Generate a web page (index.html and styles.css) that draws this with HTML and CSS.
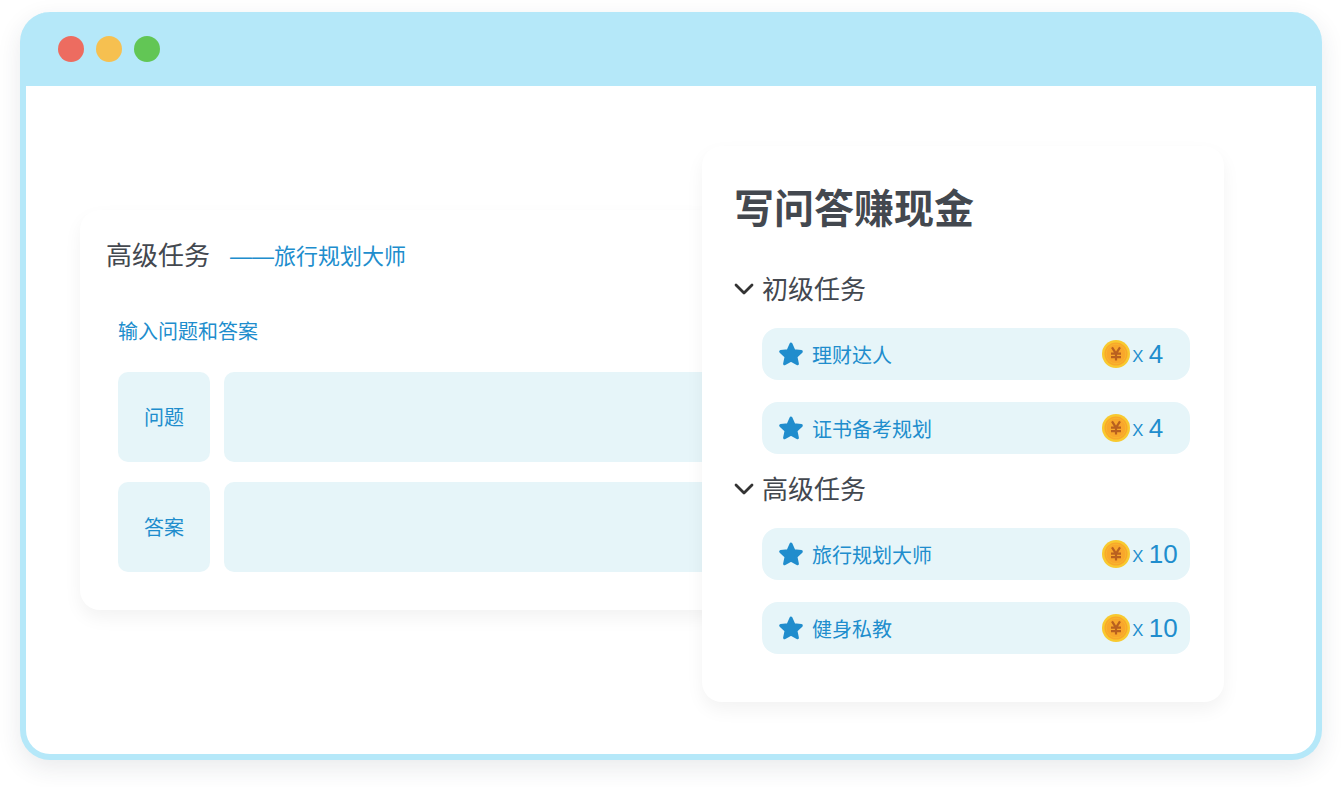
FILE: index.html
```html
<!DOCTYPE html>
<html lang="zh-CN">
<head>
  <meta charset="UTF-8">
  <meta name="viewport" content="width=device-width, initial-scale=1">
  <title>写问答赚现金</title>
  <link rel="stylesheet" href="styles.css">
</head>
<body>
<!-- shared icons -->
<svg class="sprite" aria-hidden="true">
  <symbol id="star" viewBox="0 0 26 26">
    <path d="M13 3l3 6.8 7.3.8-5.4 5 1.500 7.200-6.400-3.600-6.400 3.600 1.500-7.200-5.400-5 7.300-.8z" fill="currentColor" stroke="currentColor" stroke-width="3" stroke-linejoin="round"/>
  </symbol>
  <symbol id="arrow" viewBox="0 0 20 20">
    <path d="M2 7l8 8 8-8" fill="none" stroke="currentColor" stroke-width="2.8" stroke-linecap="round" stroke-linejoin="round"/>
  </symbol>
  <symbol id="coin" viewBox="0 0 28 28">
    <circle cx="14" cy="14" r="14" fill="#f8c92f"/>
    <circle cx="14" cy="14" r="11.5" fill="#f9a72b"/>
    <circle cx="14" cy="14" r="9.8" fill="none" stroke="#f8b62d" stroke-width="1"/>
    <path d="M10 7.4l4 6.3 4-6.3M9 13.7h10M9 17.2h10M14 13v7.6" fill="none" stroke="#b9601f" stroke-width="2.2"/>
  </symbol>
</svg>

<div class="window">
  <header class="bar">
    <span class="dot red"></span>
    <span class="dot yellow"></span>
    <span class="dot green"></span>
  </header>

  <main class="content">
    <form class="card editor">
      <div class="editor-head">
        <h2>高级任务</h2>
        <span class="sub">——旅行规划大师</span>
      </div>
      <div class="editor-body">
        <p class="tip">输入问题和答案</p>
        <div class="field">
          <label for="question">问题</label>
          <textarea id="question"></textarea>
        </div>
        <div class="field">
          <label for="answer">答案</label>
          <textarea id="answer"></textarea>
        </div>
      </div>
    </form>

    <section class="card tasks">
      <h1>写问答赚现金</h1>

      <div class="group">
        <button type="button" class="group-title"><svg class="arrow"><use href="#arrow"/></svg>初级任务</button>
        <ul>
          <li><button type="button" class="task">
            <svg class="star"><use href="#star"/></svg>
            <span class="name">理财达人</span>
            <span class="reward"><svg class="coin"><use href="#coin"/></svg><span class="times">x</span><span class="num">4</span></span>
          </button></li>
          <li><button type="button" class="task">
            <svg class="star"><use href="#star"/></svg>
            <span class="name">证书备考规划</span>
            <span class="reward"><svg class="coin"><use href="#coin"/></svg><span class="times">x</span><span class="num">4</span></span>
          </button></li>
        </ul>
      </div>

      <div class="group">
        <button type="button" class="group-title"><svg class="arrow"><use href="#arrow"/></svg>高级任务</button>
        <ul>
          <li><button type="button" class="task">
            <svg class="star"><use href="#star"/></svg>
            <span class="name">旅行规划大师</span>
            <span class="reward"><svg class="coin"><use href="#coin"/></svg><span class="times">x</span><span class="num">10</span></span>
          </button></li>
          <li><button type="button" class="task">
            <svg class="star"><use href="#star"/></svg>
            <span class="name">健身私教</span>
            <span class="reward"><svg class="coin"><use href="#coin"/></svg><span class="times">x</span><span class="num">10</span></span>
          </button></li>
        </ul>
      </div>
    </section>
  </main>
</div>
</body>
</html>
```
FILE: styles.css
```css
:root {
  --blue: #208dcd;
  --light: #e6f5f9;
  --frame: #b5e8f9;
  --text: #43484f;
}

* {
  box-sizing: border-box;
}

body {
  margin: 0;
  padding: 12px 19px 27px 20px;
  background: #fff;
  color: var(--text);
  font-family: "Noto Sans CJK SC", sans-serif;
}

h1, h2, p, ul {
  margin: 0;
  padding: 0;
}

ul {
  list-style: none;
}

button, textarea {
  border: 0;
  padding: 0;
  font-family: inherit;
}

button {
  cursor: pointer;
}

.sprite {
  display: none;
}

.window {
  border: 6px solid var(--frame);
  border-top: 0;
  border-radius: 30px;
  background: #fff;
  box-shadow: 0 8px 24px rgba(40, 50, 70, .1);
}

.bar {
  display: flex;
  align-items: center;
  gap: 12px;
  height: 74px;
  padding: 0 32px;
  background: var(--frame);
  border-radius: 24px 24px 0 0;
}

.dot {
  width: 26px;
  height: 26px;
  border-radius: 50%;
}
.red {
  background: #ed6c60;
}
.yellow {
  background: #f6c050;
}
.green {
  background: #62c655;
}

.content {
  display: flex;
  align-items: flex-start;
  padding: 60px 92px 52px 54px;
}

.card {
  background: #fff;
  border-radius: 20px;
  box-shadow: 0 8px 18px rgba(0, 0, 0, .05);
}

/* left card runs under the task list */
.editor {
  flex: 1;
  min-width: 0;
  margin: 64px -20px 0 0;
  padding: 26px 0 38px 26px;
}

.editor-head {
  display: flex;
  align-items: center;
  gap: 20px;
  height: 36px;
}

h2, .group-title {
  font-size: 26px;
  font-weight: 400;
  line-height: 36px;
}

.sub {
  color: var(--blue);
  font-family: "Liberation Sans", "Noto Sans CJK SC", sans-serif;
  font-size: 22px;
}

.editor-body {
  display: flex;
  flex-direction: column;
  gap: 20px;
  padding: 44px 0 0 12px;
}

.tip {
  margin-bottom: 6px;
  color: var(--blue);
  font-size: 20px;
  line-height: 30px;
}

.field {
  display: flex;
  gap: 14px;
  height: 90px;
}
.field label {
  display: flex;
  align-items: center;
  justify-content: center;
  width: 92px;
  padding-bottom: 2px;
  border-radius: 10px;
  background: var(--light);
  color: var(--blue);
  font-size: 20px;
}
.field textarea {
  flex: 1;
  min-width: 0;
  padding: 12px;
  border-radius: 10px;
  background: var(--light);
  color: var(--text);
  font-size: 20px;
  resize: none;
}

.tasks {
  position: relative;
  width: 522px;
  padding: 36px 34px 48px 32px;
}

h1 {
  margin-bottom: 40px;
  font-size: 40px;
  font-weight: 700;
  line-height: 48px;
}

.group + .group {
  margin-top: 16px;
}

.group-title {
  display: flex;
  align-items: center;
  gap: 8px;
  margin-bottom: 22px;
  background: none;
  color: var(--text);
}

.arrow {
  width: 20px;
  height: 20px;
  color: #333;
}

.group ul {
  display: flex;
  flex-direction: column;
  gap: 22px;
  padding-left: 28px;
}

.task {
  display: flex;
  align-items: center;
  gap: 8px;
  width: 100%;
  height: 52px;
  padding-left: 16px;
  border-radius: 16px;
  background: var(--light);
  color: var(--blue);
  font-size: 20px;
  text-align: left;
}

.star {
  width: 26px;
  height: 26px;
}

.name {
  flex: 1;
}

.reward {
  display: flex;
  align-items: center;
  width: 88px;
}

.coin {
  width: 28px;
  height: 28px;
}

.times {
  margin: 0 5px 0 2px;
  font-family: Inter, sans-serif;
  font-size: 22px;
  font-weight: 300;
  line-height: 24px;
}

.num {
  font-family: "Liberation Sans", Arial, sans-serif;
  font-size: 26px;
}
```
